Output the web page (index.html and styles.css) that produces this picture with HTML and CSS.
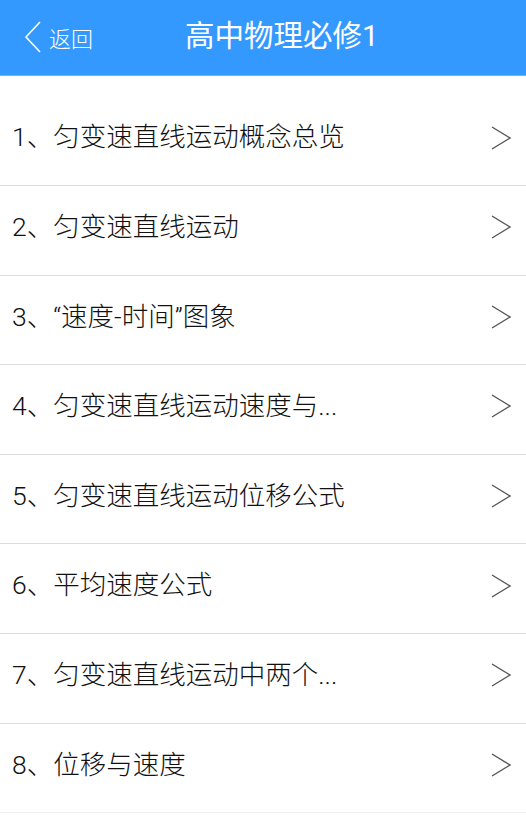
FILE: index.html
```html
<!DOCTYPE html>
<html lang="zh-CN">
<head>
<meta charset="utf-8">
<title>高中物理必修1</title>
<link rel="stylesheet" href="styles.css">
</head>
<body>
<header class="topbar">
  <a class="back">
    <svg class="back-icon" width="18" height="32" viewBox="0 0 18 32"><path d="M16 1 L2 16 L16 31" fill="none" stroke="#fff" stroke-width="1.6"/></svg>
    <span class="back-text">返回</span>
  </a>
  <h1 class="title">高中物理必修1</h1>
</header>
<ul class="list">
  <li class="item"><span class="label">1、匀变速直线运动概念总览</span><svg class="arrow" width="20" height="24" viewBox="0 0 20 24"><path d="M1 1 L19 12 L1 23" fill="none" stroke="#555" stroke-width="1.4"/></svg></li>
  <li class="item"><span class="label">2、匀变速直线运动</span><svg class="arrow" width="20" height="24" viewBox="0 0 20 24"><path d="M1 1 L19 12 L1 23" fill="none" stroke="#555" stroke-width="1.4"/></svg></li>
  <li class="item"><span class="label">3、“速度-时间”图象</span><svg class="arrow" width="20" height="24" viewBox="0 0 20 24"><path d="M1 1 L19 12 L1 23" fill="none" stroke="#555" stroke-width="1.4"/></svg></li>
  <li class="item"><span class="label">4、匀变速直线运动速度与...</span><svg class="arrow" width="20" height="24" viewBox="0 0 20 24"><path d="M1 1 L19 12 L1 23" fill="none" stroke="#555" stroke-width="1.4"/></svg></li>
  <li class="item"><span class="label">5、匀变速直线运动位移公式</span><svg class="arrow" width="20" height="24" viewBox="0 0 20 24"><path d="M1 1 L19 12 L1 23" fill="none" stroke="#555" stroke-width="1.4"/></svg></li>
  <li class="item"><span class="label">6、平均速度公式</span><svg class="arrow" width="20" height="24" viewBox="0 0 20 24"><path d="M1 1 L19 12 L1 23" fill="none" stroke="#555" stroke-width="1.4"/></svg></li>
  <li class="item"><span class="label">7、匀变速直线运动中两个...</span><svg class="arrow" width="20" height="24" viewBox="0 0 20 24"><path d="M1 1 L19 12 L1 23" fill="none" stroke="#555" stroke-width="1.4"/></svg></li>
  <li class="item last"><span class="label">8、位移与速度</span><svg class="arrow" width="20" height="24" viewBox="0 0 20 24"><path d="M1 1 L19 12 L1 23" fill="none" stroke="#555" stroke-width="1.4"/></svg></li>
</ul>
</body>
</html>
```
FILE: styles.css
```css
html, body {
  margin: 0;
  padding: 0;
  background: #fff;
}
body {
  font-family: Roboto, "Noto Sans CJK SC", sans-serif;
  font-weight: 300;
  overflow: hidden;
}
.topbar {
  height: 75px;
  background: #3399fe;
  border-bottom: 1px solid #6db6ff;
  display: flex;
  align-items: center;
  color: #fff;
}
.back {
  display: flex;
  align-items: center;
  padding-left: 24px;
  width: 185px;
  box-sizing: border-box;
}
.back-icon {
  display: block;
  margin-right: 7px;
  margin-top: -2px;
}
.back-text {
  font-size: 22px;
  line-height: 1;
  margin-top: 4px;
}
.title {
  margin: 0;
  font-size: 29.5px;
  font-weight: 400;
  line-height: 1;
  margin-top: -2px;
}
.list {
  list-style: none;
  margin: 20.4px 0 0;
  padding: 0;
}
.item {
  box-sizing: border-box;
  height: 89.6px;
  border-bottom: 1px solid #dcdcdc;
  display: flex;
  align-items: center;
  justify-content: space-between;
  padding: 0 15px 6px 12px;
  font-size: 26.5px;
  color: #111;
}
.item.last {
  border-bottom-color: #efefef;
}
.label {
  line-height: 1;
  white-space: nowrap;
}
.arrow {
  display: block;
}
```
